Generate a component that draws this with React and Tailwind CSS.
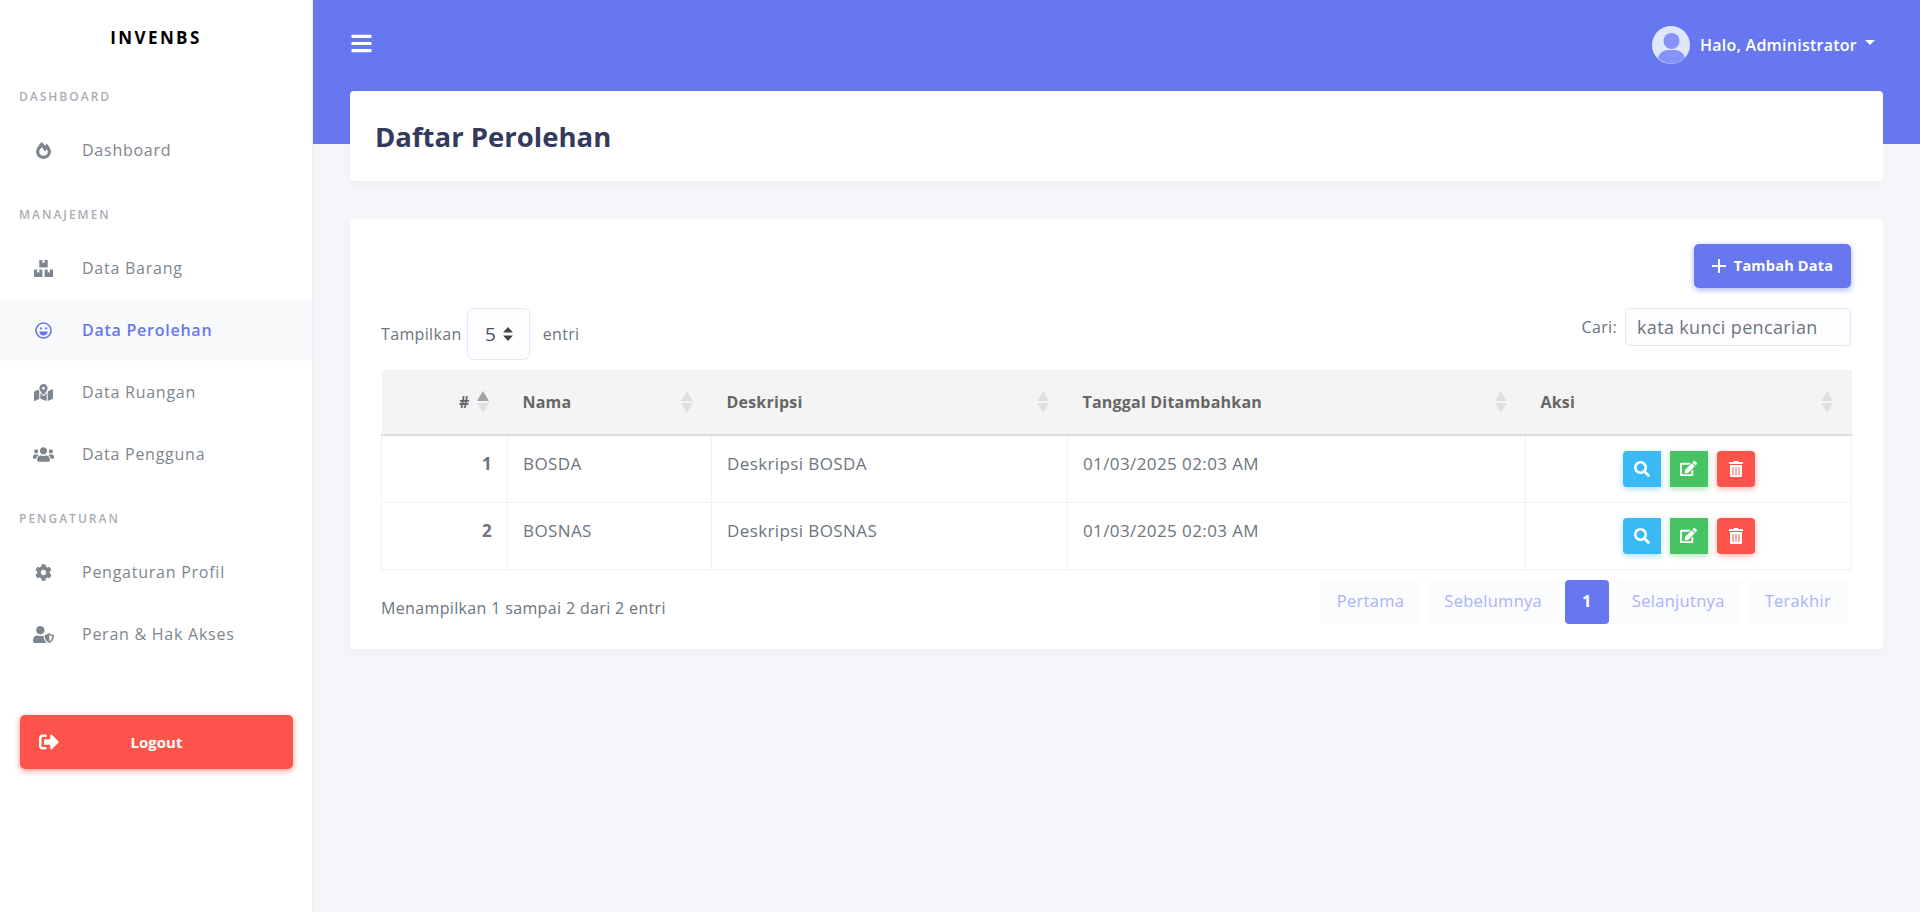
import { FaFireAlt, FaBoxes, FaRegLaugh, FaMapMarkedAlt, FaUsers, FaCog, FaUserShield, FaSignOutAlt, FaBars, FaSearch, FaEdit, FaTrashAlt } from 'react-icons/fa';

const menu = [
  { header: 'Dashboard', items: [{ label: 'Dashboard', icon: FaFireAlt, size: 'size-[17px]' }] },
  {
    header: 'Manajemen',
    items: [
      { label: 'Data Barang', icon: FaBoxes, size: 'size-[19px]' },
      { label: 'Data Perolehan', icon: FaRegLaugh, active: true, size: 'size-[17px]' },
      { label: 'Data Ruangan', icon: FaMapMarkedAlt, size: 'size-[19px]' },
      { label: 'Data Pengguna', icon: FaUsers, size: 'size-[21px]' },
    ],
  },
  {
    header: 'Pengaturan',
    items: [
      { label: 'Pengaturan Profil', icon: FaCog, size: 'size-[17px]' },
      { label: 'Peran & Hak Akses', icon: FaUserShield, size: 'size-[21px]' },
    ],
  },
];

const rows = [
  { id: 1, nama: 'BOSDA', deskripsi: 'Deskripsi BOSDA', tanggal: '01/03/2025 02:03 AM' },
  { id: 2, nama: 'BOSNAS', deskripsi: 'Deskripsi BOSNAS', tanggal: '01/03/2025 02:03 AM' },
];

function SortArrows({ active }) {
  return (
    <svg width="12" height="22" viewBox="0 0 12 22" className="shrink-0">
      <path d="M6 0L12 10H0Z" fill={active ? '#a3a3a3' : '#e0e0e0'} />
      <path d="M6 22L12 12H0Z" fill="#e0e0e0" />
    </svg>
  );
}

function Avatar() {
  return (
    <svg width="38" height="38" viewBox="0 0 38 38" className="shrink-0">
      <circle cx="19" cy="19" r="19" fill="#dfe7fd" />
      <circle cx="19.5" cy="15" r="8" fill="#8693fb" />
      <path d="M6 32c1-5 6-8 10-8h7c4 0 9 3 10 8a19 19 0 0 1-27 0Z" fill="#8693fb" />
    </svg>
  );
}

function ActionButton({ color, shadow, rounded, icon: Icon, size }) {
  return (
    <button className={`flex h-9 w-[38px] items-center justify-center text-white ${color} ${shadow} ${rounded}`}>
      <Icon className={size} />
    </button>
  );
}

function Sidebar() {
  return (
    <aside className="w-[313px] shrink-0 bg-white border-r border-[#eef0f5]">
      <div className="flex h-[75px] items-center justify-center text-[17px] font-bold tracking-[2.4px] text-black">INVENBS</div>
      {menu.map((group) => (
        <div key={group.header}>
          <div className="flex h-[44px] items-center px-[19px] text-[12px] font-semibold uppercase tracking-[2px] text-[#a9aeb5]">{group.header}</div>
          {group.items.map((item) => (
            <a
              key={item.label}
              className={`flex h-[62px] items-center text-[16px] tracking-[0.75px] ${item.active ? 'bg-[#f8fafb] text-[#6777ef] font-semibold' : 'text-[#7d868e]'}`}
            >
              <span className="flex w-[82px] justify-center pl-[4px]">
                <item.icon className={item.size} />
              </span>
              {item.label}
            </a>
          ))}
          <div className="h-[12px]" />
        </div>
      ))}
      <div className="mt-[38px] px-[20px]">
        <button className="relative flex h-[54px] w-[273px] items-center justify-center rounded-[5px] bg-[#fc544b] text-[15px] font-bold text-white shadow-[0_2px_6px_#fd9b96]">
          <FaSignOutAlt className="absolute left-[19px] text-[20px]" />
          Logout
        </button>
      </div>
    </aside>
  );
}

function Pager({ children, active }) {
  return (
    <a className={`flex h-[44px] items-center rounded-[4px] px-[17px] text-[16.5px] tracking-[0.3px] ${active ? 'bg-[#6777ef] font-bold text-white' : 'bg-[#fbfcfe] text-[#aab2f8]'}`}>
      {children}
    </a>
  );
}

export default function App() {
  return (
    <div className="flex min-h-[912px] bg-[#f4f6f9] font-['Open_Sans','Lato',sans-serif] text-[#6c757d]">
      <Sidebar />
      <main className="min-w-0 flex-1">
        <header className="flex h-[144px] items-start justify-between bg-[#6777ef] pl-[37px] pr-[44px] pt-[26px] text-white">
          <FaBars className="mt-[6px] size-[23px]" />
          <div className="flex items-center gap-[10px]">
            <Avatar />
            <span className="text-[16px] font-semibold tracking-[0.25px]">Halo, Administrator</span>
            <svg width="12" height="6" viewBox="0 0 12 6" className="-ml-[3px] mb-[4px]"><path d="M1 0H11L6 5Z" fill="#fff" /></svg>
          </div>
        </header>
        <div className="-mt-[53px] px-[37px]">
          <div className="flex h-[90px] items-center rounded-[4px] bg-white px-[25px] pt-[1px] shadow-[0_4px_8px_rgba(0,0,0,0.03)]">
            <h1 className="text-[27.5px] font-bold text-[#34395e]">Daftar Perolehan</h1>
          </div>
          <section className="mt-[38px] h-[430px] rounded-[4px] bg-white pl-[31px] pr-[32px] pt-[25px] shadow-[0_4px_8px_rgba(0,0,0,0.03)]">
            <div className="flex justify-end">
              <button className="flex h-[44px] w-[157px] items-center justify-center gap-[8px] rounded-[5px] bg-[#6777ef] text-[14.5px] font-bold tracking-[0.2px] text-white shadow-[0_2px_6px_#acb5f6]">
                <svg width="14" height="14" viewBox="0 0 14 14"><path d="M7 0V14M0 7H14" stroke="#fff" strokeWidth="2" /></svg>
                Tambah Data
              </button>
            </div>
            <div className="mt-[20px] flex items-start justify-between">
              <div className="flex items-center text-[16px] tracking-[0.35px]">
                Tampilkan
                <div className="ml-[5px] flex h-[52px] w-[63px] items-center justify-center gap-[7px] rounded-[6px] border border-[#e4e6fc] bg-[#fdfdff] pl-[2px] text-[19px] text-[#495057]">
                  5
                  <svg width="10" height="14" viewBox="0 0 10 14"><path d="M5 0L10 5.5H0ZM5 14L0 8.5H10Z" fill="#444" /></svg>
                </div>
                <span className="ml-[13px]">entri</span>
              </div>
              <div className="flex items-center text-[16px] tracking-[0.35px]">
                Cari:
                <div className="ml-[8px] flex h-[38px] w-[226px] items-center rounded-[4px] border border-[#e4e6fc] bg-[#fdfdff] px-[11px] text-[18px]">kata kunci pencarian</div>
              </div>
            </div>
            <table className="mt-[10px] w-full table-fixed border-collapse text-[17px] tracking-[0.4px]">
              <colgroup>
                <col className="w-[126px]" />
                <col className="w-[204px]" />
                <col className="w-[356px]" />
                <col className="w-[458px]" />
                <col className="w-[326px]" />
              </colgroup>
              <thead>
                <tr className="h-[65px] border-b-2 border-[#dddddd] bg-[#f4f4f4] text-[16px] tracking-[0.2px] text-[#666666]">
                  <th className="pl-[15px] pr-[19px] text-right font-bold">
                    <div className="flex items-center justify-end gap-[7px]"># <SortArrows active /></div>
                  </th>
                  {['Nama', 'Deskripsi', 'Tanggal Ditambahkan', 'Aksi'].map((h) => (
                    <th key={h} className="pl-[15px] pr-[19px] text-left font-bold">
                      <div className="flex items-center justify-between">{h} <SortArrows /></div>
                    </th>
                  ))}
                </tr>
              </thead>
              <tbody>
                {rows.map((r) => (
                  <tr key={r.id} className="h-[67px] border border-[#f1f1f3]">
                    <td className="border border-[#f1f1f3] px-[15px] pb-[10px] text-right font-bold">{r.id}</td>
                    <td className="border border-[#f1f1f3] px-[15px] pb-[10px]">{r.nama}</td>
                    <td className="border border-[#f1f1f3] px-[15px] pb-[10px]">{r.deskripsi}</td>
                    <td className="border border-[#f1f1f3] px-[15px] pb-[10px]">{r.tanggal}</td>
                    <td className="border border-[#f1f1f3] px-[15px]">
                      <div className="flex items-center justify-center gap-[9px]">
                        <ActionButton color="bg-[#3abaf4]" shadow="shadow-[0_2px_6px_#a8e0fa]" rounded="rounded-l-[4px]" icon={FaSearch} size="size-[16px]" />
                        <ActionButton color="bg-[#47c363]" shadow="shadow-[0_2px_6px_#b0e5bc]" rounded="rounded-none" icon={FaEdit} size="size-[17px]" />
                        <ActionButton color="bg-[#fc544b]" shadow="shadow-[0_2px_6px_#fdb5b1]" rounded="rounded-[4px]" icon={FaTrashAlt} size="size-[16px]" />
                      </div>
                    </td>
                  </tr>
                ))}
              </tbody>
            </table>
            <div className="mt-[10px] flex items-start justify-between pr-[3px]">
              <span className="mt-[16px] text-[16px] tracking-[0.35px]">Menampilkan 1 sampai 2 dari 2 entri</span>
              <div className="flex gap-[6px]">
                <Pager>Pertama</Pager>
                <Pager>Sebelumnya</Pager>
                <Pager active>1</Pager>
                <Pager>Selanjutnya</Pager>
                <Pager>Terakhir</Pager>
              </div>
            </div>
          </section>
        </div>
      </main>
    </div>
  );
}
